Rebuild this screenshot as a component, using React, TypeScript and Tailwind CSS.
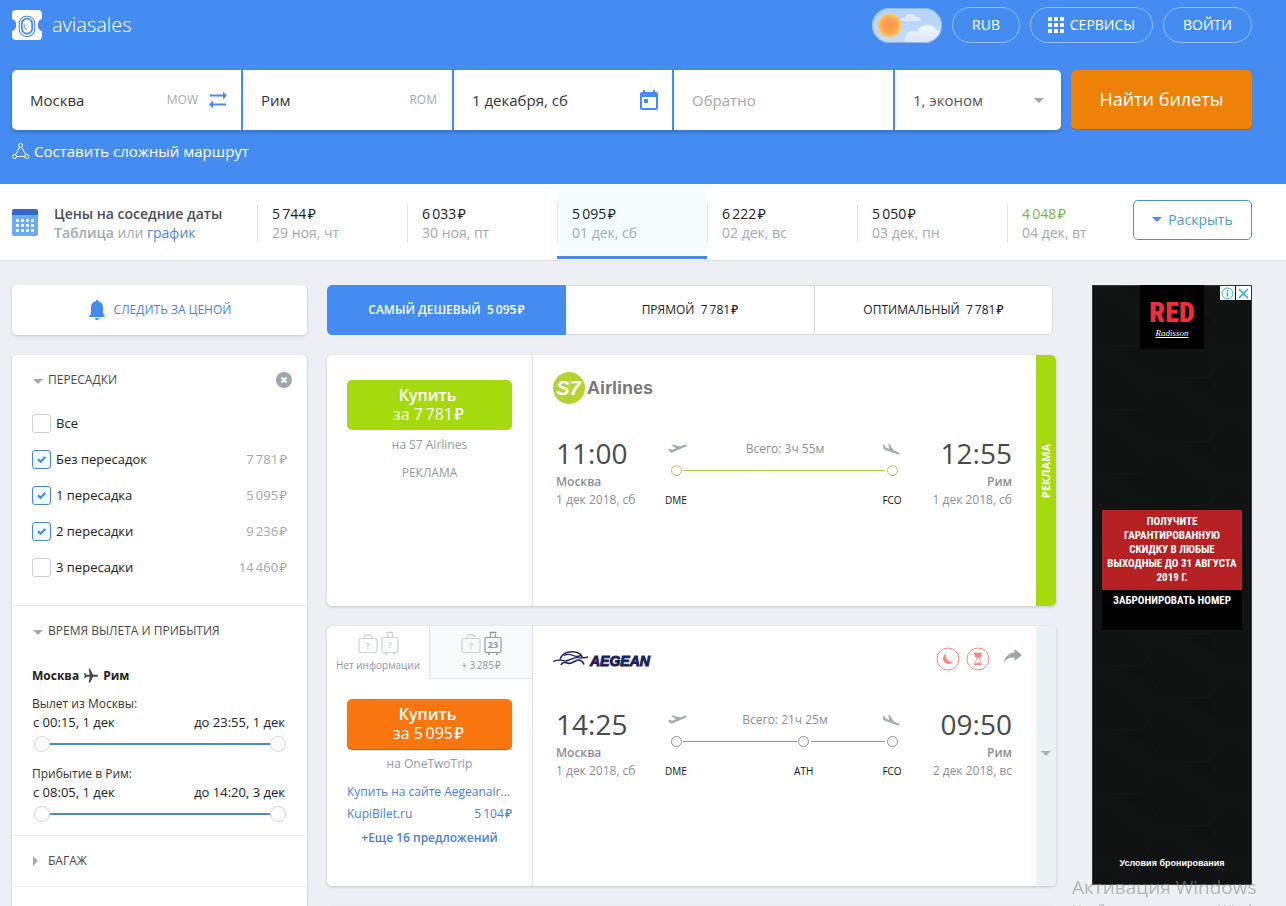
import React, { useState } from 'react';

const T = '\u2009';
const R = '\u200a₽';

function Caret({ className = '' }: { className?: string }) {
  return (
    <svg viewBox="0 0 10 5" className={`h-[5px] w-[10px] shrink-0 ${className}`} aria-hidden="true">
      <path d="M0 0h10L5 5z" fill="currentColor" />
    </svg>
  );
}

function BrandMark() {
  return (
    <svg viewBox="0 0 30 30" className="h-[30px] w-[30px]" aria-hidden="true">
      <path
        d="M4 0h22a4 4 0 0 1 4 4v5a5.500 5.500 0 0 0-4 6 5.500 5.500 0 0 0 4 6v5a4 4 0 0 1-4 4H4a4 4 0 0 1-4-4v-5a5.500 5.500 0 0 0 4-6 5.500 5.500 0 0 0-4-6V4a4 4 0 0 1 4-4z"
        fill="#fff"
      />
      <rect x="7.200" y="6.200" width="15.600" height="20.300" rx="7.500" fill="none" stroke="#458cf2" strokeWidth="1.100" />
      <rect x="9.800" y="8.600" width="10.400" height="15" rx="5.200" fill="none" stroke="#458cf2" strokeWidth="1.800" />
      <path d="M12.200 14.500c0 3 .8 4.500 2.800 5.200" fill="none" stroke="#458cf2" strokeWidth="1" />
    </svg>
  );
}

function WeatherToggle() {
  return (
    <button type="button" aria-label="Погода" className="h-[35px] w-[70px] cursor-pointer">
      <svg viewBox="0 0 70 35" className="h-full w-full" aria-hidden="true">
        <defs>
          <radialGradient id="sun">
            <stop offset="0" stopColor="#ff9548" />
            <stop offset=".55" stopColor="#fda152" />
            <stop offset="1" stopColor="#fdc766" />
          </radialGradient>
          <linearGradient id="sky" x1="0" x2="0" y1="0" y2="1">
            <stop offset="0" stopColor="#b4d3fa" />
            <stop offset="1" stopColor="#c2dcfb" />
          </linearGradient>
          <linearGradient id="cloud" x1="0" x2="0" y1="0" y2="1">
            <stop offset="0" stopColor="#f3f8ff" />
            <stop offset="1" stopColor="#d6e6fc" />
          </linearGradient>
          <clipPath id="capsule">
            <rect width="70" height="35" rx="17.500" />
          </clipPath>
        </defs>
        <g clipPath="url(#capsule)">
          <rect width="70" height="35" fill="url(#sky)" />
          <path d="M28 13c1-3 3-3.500 5-3 1-5.500 9-5.500 11-1 3-.5 4 1 5 4z" fill="#dfebfd" />
          <path d="M33 35c-1-8 3-12.500 8-12 2 0 3 .5 4 1 3-9 17-9 20-1 4-1 7 2 7 5v7z" fill="url(#cloud)" />
        </g>
        <rect x=".5" y=".5" width="69" height="34" rx="17" fill="none" stroke="#8fb6e8" />
        <circle cx="17.500" cy="17.500" r="11.700" fill="url(#sun)" stroke="#f3cf86" strokeWidth=".8" />
      </svg>
    </button>
  );
}

function Header() {
  const [from, setFrom] = useState('Москва');
  const [to, setTo] = useState('Рим');
  const pill =
    'flex h-9 cursor-pointer items-center justify-center gap-[6px] rounded-full border border-[#94befa] pb-px text-[14px] text-white';
  return (
    <header className="bg-[#458cf2] pr-[34px] pl-3 pt-[7px] pb-[22px]">
      <div className="flex items-center justify-between">
        <a href="#home" className="flex items-center gap-[10px] text-white">
          <BrandMark />
          <span className="text-[20px] leading-[30px] font-light">aviasales</span>
        </a>
        <nav className="flex items-center gap-[10px]">
          <WeatherToggle />
          <button type="button" className={`${pill} w-[68px]`}>RUB</button>
          <button type="button" className={`${pill} w-[123px]`}>
            <svg viewBox="0 0 16 16" className="h-4 w-4" fill="#fff" aria-hidden="true">
              {[0, 6, 12].map((y) => [0, 6, 12].map((x) => <rect key={`${x}-${y}`} x={x} y={y} width="4" height="4" rx=".6" />))}
            </svg>
            СЕРВИСЫ
          </button>
          <button type="button" className={`${pill} w-[89px]`}>ВОЙТИ</button>
        </nav>
      </div>

      <form className="mt-[27px] flex gap-[10px]" onSubmit={(e) => e.preventDefault()}>
        <div className="grid h-[60px] flex-1 grid-cols-[229fr_209fr_218fr_219fr_166fr] gap-[2px] overflow-hidden rounded-[5px] text-[15px] text-[#333] shadow-[0_2px_4px_rgba(0,0,0,0.2)]">
          <div className="flex min-w-0 items-center bg-white pr-[14px] pl-[18px]">
            <input aria-label="Откуда" value={from} onChange={(e) => setFrom(e.target.value)} className="w-0 flex-1 outline-none" />
            <span className="mr-[11px] text-[12px] text-[#a0abb4]">MOW</span>
            <button type="button" aria-label="Поменять местами" onClick={() => { setFrom(to); setTo(from); }} className="cursor-pointer">
              <svg viewBox="0 0 18 18" className="h-[18px] w-[18px]" fill="#458cf2" aria-hidden="true">
                <path d="M1 4h13V1l4 4-4 4V6H1zM17 13H4v-3l-4 4 4 4v-3h13z" transform="translate(0 -.5)" />
              </svg>
            </button>
          </div>
          <div className="flex min-w-0 items-center bg-white pr-[15px] pl-[18px]">
            <input aria-label="Куда" value={to} onChange={(e) => setTo(e.target.value)} className="w-0 flex-1 outline-none" />
            <span className="text-[12px] text-[#a0abb4]">ROM</span>
          </div>
          <div className="flex min-w-0 items-center bg-white pr-[14px] pl-[18px]">
            <input aria-label="Туда" defaultValue="1 декабря, сб" className="w-0 flex-1 outline-none" />
            <svg viewBox="0 0 18 20" className="h-5 w-[18px]" aria-hidden="true">
              <path d="M3 0h2v2h8V0h2v2h1a2 2 0 0 1 2 2v14a2 2 0 0 1-2 2H2a2 2 0 0 1-2-2V4a2 2 0 0 1 2-2h1zM2 7v11h14V7z" fill="#458cf2" fillRule="evenodd" />
              <rect x="4" y="9" width="4" height="4" fill="#458cf2" />
            </svg>
          </div>
          <div className="flex min-w-0 items-center bg-white px-[18px]">
            <input aria-label="Обратно" placeholder="Обратно" className="w-0 flex-1 outline-none placeholder:text-[#a3a7ab]" />
          </div>
          <div className="flex min-w-0 items-center bg-white pr-[17px] pl-[18px]">
            <select aria-label="Пассажиры и класс" className="w-0 flex-1 appearance-none text-[#555] outline-none">
              <option>1, эконом</option>
              <option>1, бизнес</option>
            </select>
            <Caret className="text-[#98a5ae]" />
          </div>
        </div>
        <button type="submit" className="h-[59px] w-[181px] cursor-pointer rounded-[5px] bg-[#ee8208] text-[18px] text-white shadow-[0_1px_1px_#b0621d]">
          Найти билеты
        </button>
      </form>
      <a href="#multi" className="mt-[11px] flex w-fit items-center gap-1 text-[15px] leading-[21px] text-white">
        <svg viewBox="0 0 18 18" className="h-[18px] w-[18px]" fill="none" stroke="#fff" aria-hidden="true">
          <circle cx="8.500" cy="2.500" r="2" />
          <circle cx="2.500" cy="13.500" r="2" />
          <circle cx="14.800" cy="13.500" r="2" />
          <path d="M7.600 4.300l-4.200 7.500M9.500 4.300l4.400 7.400M4.500 13.500h8.300" />
        </svg>
        Составить сложный маршрут
      </a>
    </header>
  );
}

const days = [
  [`5${T}744${R}`, '29 ноя, чт'],
  [`6${T}033${R}`, '30 ноя, пт'],
  [`5${T}095${R}`, '01 дек, сб'],
  [`6${T}222${R}`, '02 дек, вс'],
  [`5${T}050${R}`, '03 дек, пн'],
  [`4${T}048${R}`, '04 дек, вт'],
];

function PriceStrip() {
  return (
    <section className="flex border-b border-[#dee0e3] bg-white pr-[34px] pl-3">
      <svg viewBox="0 0 26 27" className="mt-[25px] h-[27px] w-[26px] shrink-0" aria-hidden="true">
        <rect width="26" height="27" rx="2.500" fill="#6caaf3" />
        <path d="M2.500 0h21A2.500 2.500 0 0 1 26 2.500V6H0V2.500A2.500 2.500 0 0 1 2.500 0z" fill="#3069c9" />
        {[10, 15, 20].map((y) => [4, 9, 14, 19].map((x) => <rect key={`${x}-${y}`} x={x} y={y} width="3" height="3" fill="#eaf3fd" />))}
      </svg>
      <div className="ml-4 w-[203px] shrink-0 pt-5 text-[14px] leading-[19px]">
        <h2 className="font-semibold text-[#4a4f55]">Цены на соседние даты</h2>
        <p className="text-[#a0abb4]">
          <span className="font-semibold">Таблица</span> или <a href="#chart" className="text-[#4f86dc]">график</a>
        </p>
      </div>
      <div className="grid flex-1 grid-cols-6">
        {days.map(([price, day], i) => {
          const active = i === 2;
          return (
            <button
              key={day}
              type="button"
              className={`h-[76px] cursor-pointer pb-px text-left text-[14px] leading-[19px] ${active ? 'bg-[#f4fdff]' : ''}`}
            >
              <span className={`block h-full border-b-[3px] pt-5 ${active ? 'border-[#4a87de]' : 'border-transparent'}`}>
                <span className="block w-full border-l border-[#e2e5e8] pl-[14px]">
                  <span className={`block ${i === 5 ? 'text-[#79b549]' : 'text-[#222]'}`}>{price}</span>
                  <span className="block text-[#a0abb4]">{day}</span>
                </span>
              </span>
            </button>
          );
        })}
      </div>
      <button type="button" className="mt-4 -ml-6 flex h-10 w-[119px] shrink-0 cursor-pointer items-center justify-center gap-[6px] rounded-[5px] border border-[#409dc2] bg-white pb-px text-[14px] text-[#4c9dcb]">
        <Caret className="text-[#458cf2]" />
        Раскрыть
      </button>
    </section>
  );
}

function SectionTitle({ title, closed, clear }: { title: string; closed?: boolean; clear?: boolean }) {
  return (
    <div className="flex h-[50px] items-center justify-between">
      <button type="button" aria-expanded={!closed} className="flex cursor-pointer items-center gap-1 text-[12px] font-medium text-[#4a4a4a]">
        <svg viewBox="0 0 12 10" className="h-[10px] w-3" fill="#a0abb0" aria-hidden="true">
          {closed ? <path d="M1 0l5 5-5 5z" /> : <path d="M1 4h10L6 9z" />}
        </svg>
        {title}
      </button>
      {clear && (
        <button type="button" aria-label="Сбросить" className="-mr-[5px] cursor-pointer">
          <svg viewBox="0 0 16 16" className="h-4 w-4" aria-hidden="true">
            <circle cx="8" cy="8" r="8" fill="#9aa8b1" />
            <path d="M5.500 5.500l5 5M10.500 5.500l-5 5" stroke="#fff" strokeWidth="1.800" />
          </svg>
        </button>
      )}
    </div>
  );
}

const stops = [
  { label: 'Все', price: '', on: false },
  { label: 'Без пересадок', price: `7${T}781${R}`, on: true },
  { label: '1 пересадка', price: `5${T}095${R}`, on: true },
  { label: '2 пересадки', price: `9${T}236${R}`, on: true },
  { label: '3 пересадки', price: `14${T}460${R}`, on: false },
];

const thumb =
  'pointer-events-none absolute inset-0 m-0 h-[22px] w-full appearance-none bg-transparent [&::-webkit-slider-thumb]:pointer-events-auto [&::-webkit-slider-thumb]:h-4 [&::-webkit-slider-thumb]:w-4 [&::-webkit-slider-thumb]:appearance-none [&::-webkit-slider-thumb]:rounded-full [&::-webkit-slider-thumb]:border [&::-webkit-slider-thumb]:border-[#d3d6d9] [&::-webkit-slider-thumb]:bg-white';

function TimeRange({ title, from, to }: { title: string; from: string; to: string }) {
  return (
    <div>
      <div className="text-[12px] leading-[18px] text-[#333]">{title}</div>
      <div className="flex justify-between pr-[2px] pl-px text-[13px] leading-[18px] text-[#222]">
        <span>{from}</span>
        <span>{to}</span>
      </div>
      <div className="relative mt-[2px] mr-px ml-[2px] flex h-[22px] items-center px-4">
        <div className="h-[2px] w-full bg-[#4f86d0]" />
        <input type="range" aria-label={`${title} с`} defaultValue={0} className={thumb} />
        <input type="range" aria-label={`${title} до`} defaultValue={100} className={thumb} />
      </div>
    </div>
  );
}

const card = 'rounded-[5px] bg-white shadow-[0_1px_3px_rgba(0,0,0,0.18)]';

function Sidebar() {
  return (
    <aside className="flex w-[295px] shrink-0 flex-col gap-5">
      <button type="button" className={`${card} flex h-[50px] cursor-pointer items-center justify-center gap-2 text-[12px] font-medium text-[#4a80dc]`}>
        <svg viewBox="0 0 16 20" className="h-5 w-[18px]" fill="#458cf2" aria-hidden="true">
          <path d="M8 0c.8 0 1.300.5 1.300 1.300C12.500 2 14 4.300 14 7.500v6L16 16.500v.5H0v-.5l2-3v-6C2 4.300 3.500 2 6.700 1.300 6.700.5 7.200 0 8 0zM6 18h4c0 1.200-.8 2-2 2s-2-.8-2-2z" />
        </svg>
        СЛЕДИТЬ ЗА ЦЕНОЙ
      </button>
      <div className={`${card} flex-1`}>
        <section className="border-b border-[#edeff1] px-5 pb-5">
          <SectionTitle title="ПЕРЕСАДКИ" clear />
          {stops.map((s) => (
            <label key={s.label} className="flex h-9 cursor-pointer items-center pt-px text-[13px] text-[#222]">
              <span className="relative mr-[5px] h-[19px] w-[19px]">
                <input
                  type="checkbox"
                  defaultChecked={s.on}
                  className="peer block h-[19px] w-[19px] appearance-none rounded-[3px] border border-[#cdd0d2] bg-white checked:border-[#4f86dc] checked:bg-[#f0fbff]"
                />
                <svg viewBox="0 0 19 19" className="pointer-events-none absolute inset-0 hidden peer-checked:block" aria-hidden="true">
                  <path d="M6 9.300l2.500 2.400 4.700-4.700" fill="none" stroke="#4a87de" strokeWidth="2.200" />
                </svg>
              </span>
              {s.label}
              <span className="ml-auto text-[#a3a9ad]">{s.price}</span>
            </label>
          ))}
        </section>
        <section className="border-b border-[#edeff1] px-5 pb-[10px]">
          <SectionTitle title="ВРЕМЯ ВЫЛЕТА И ПРИБЫТИЯ" />
          <div className="mt-[10px] mb-[9px] flex items-center gap-1 text-[12px] leading-5 font-bold text-[#222]">
            Москва
            <svg viewBox="0 0 24 24" className="h-4 w-4 rotate-90" fill="#444" aria-hidden="true">
              <path d="M22 15.500v-2l-9-4.500V3.500c0-.83-.67-2-1.500-2S10 2.670 10 3.500V9l-9 4.500v2l9-1.500V19l-2.500 2v1.500l4-1 4 1V21L13 19v-5z" />
            </svg>
            Рим
          </div>
          <div className="flex flex-col gap-[10px]">
            <TimeRange title="Вылет из Москвы:" from="с 00:15, 1 дек" to="до 23:55, 1 дек" />
            <TimeRange title="Прибытие в Рим:" from="с 08:05, 1 дек" to="до 14:20, 3 дек" />
          </div>
        </section>
        <section className="border-b border-[#edeff1] px-5">
          <SectionTitle title="БАГАЖ" closed />
        </section>
      </div>
    </aside>
  );
}

function PlaneUp() {
  return (
    <svg viewBox="0 0 19 10" className="h-[10px] w-[19px]" fill="#a3adb3" aria-hidden="true">
      <path d="M0 5.200l1.600-.5 2.600 1.100 3.800-1.500L3.200.9 5.200.4l7 2.200 3.500-1.500c1.300-.5 2.600-.6 3.100-.2.300.6-.7 1.500-2 2L4.500 8.600c-.9.300-1.600.2-2.200-.4z" />
    </svg>
  );
}

function PlaneDown() {
  return (
    <svg viewBox="0 0 17 12" className="h-3 w-[17px]" fill="#a3adb3" aria-hidden="true">
      <path d="M0 1.500l1.400.5 1.300 2.600 3.700 1.300L5.200.8l1.700.6 4 6.100 3.700 1.500c1.300.5 2.300 1.300 2.100 2-.3.600-1.500.6-2.800.1L2.200 7C.9 6.500.3 5.900.2 4.800z" />
    </svg>
  );
}

function Route({ total, codes, green }: { total: string; codes: string[]; green?: boolean }) {
  const line = green ? 'bg-[#abcb3c]' : 'bg-[#8f9396]';
  const ring = green ? 'border-[#abcb3c]' : 'border-[#8f9396]';
  const spans = codes.length === 3 ? ['grow-[104]', 'grow-[68]'] : ['grow'];
  return (
    <div className="flex-1 pt-[5px]">
      <div className="flex h-[18px] items-center justify-between px-[3px] text-[12px] text-[#8b8f94]">
        <PlaneUp />
        <span>Всего: {total}</span>
        <PlaneDown />
      </div>
      <div className="mt-[7px] flex">
        {codes.map((code, i) => (
          <React.Fragment key={code}>
            {i > 0 && <div className={`-mx-1 mt-[5px] h-px ${line} ${spans[i - 1]}`} />}
            <div className="flex w-[22px] flex-col items-center gap-[17px]">
              <span className={`h-[11px] w-[11px] rounded-full border ${ring}`} />
              <span className="text-[10px] leading-[14px] font-medium text-[#111]">{code}</span>
            </div>
          </React.Fragment>
        ))}
      </div>
    </div>
  );
}

function Endpoint({ time, city, date, right }: { time: string; city: string; date: string; right?: boolean }) {
  return (
    <div className={`w-[109px] whitespace-nowrap text-[12px] leading-[18px] text-[#8b8f94] ${right ? 'text-right' : ''}`}>
      <div className="mb-[2px] text-[28px] leading-9 text-[#4a4a4a]">{time}</div>
      <div className="font-semibold">{city}</div>
      <div>{date}</div>
    </div>
  );
}

function Flight(props: {
  logo: React.ReactNode;
  actions?: React.ReactNode;
  dep: [string, string, string];
  arr: [string, string, string];
  total: string;
  codes: string[];
  green?: boolean;
}) {
  const { logo, actions, dep, arr, total, codes, green } = props;
  return (
    <div className="w-[503px] grow pt-[17px]">
      <div className="flex h-8 items-center justify-between pr-[14px] pl-5">
        {logo}
        {actions}
      </div>
      <div className="mt-[31px] flex pr-6 pl-[23px]">
        <Endpoint time={dep[0]} city={dep[1]} date={dep[2]} />
        <Route total={total} codes={codes} green={green} />
        <Endpoint time={arr[0]} city={arr[1]} date={arr[2]} right />
      </div>
    </div>
  );
}

function S7Logo() {
  return (
    <div className="flex items-center gap-[2px] font-['Liberation_Sans',sans-serif] font-bold">
      <span className="flex h-8 w-8 items-center justify-center rounded-full bg-[#b3d335] pr-px text-[20px] leading-none text-white italic">S7</span>
      <span className="text-[18px] leading-none text-[#77787b]">Airlines</span>
    </div>
  );
}

function AegeanLogo() {
  return (
    <div className="flex items-center gap-px">
      <svg viewBox="0 0 36 18" className="h-[18px] w-9" fill="none" stroke="#1a2356" aria-hidden="true">
        <path d="M0 11.500c4-1.500 8-1.800 11-.8 5 1.500 8-4 14-3 3 .4 6 .3 10-.7" strokeWidth="1.300" />
        <path d="M7 9.500C9 4 14 1.800 19 1.800S28 4 29.500 7.500" strokeWidth="1.500" />
        <path d="M11 5.500c3-1.500 6-1.500 9 0s6 .8 8-.2" strokeWidth="1.300" />
        <path d="M8 15c1-3 4-3.200 7-1.800 4 1.500 7-3.700 11-3.200 2.500.3 4 2 5 4.500" strokeWidth="1.600" />
      </svg>
      <span className="pt-[3px] font-['Liberation_Sans',sans-serif] text-[14px] leading-none font-bold text-[#1a2356] italic [-webkit-text-stroke:1px_#1a2356]">AEGEAN</span>
    </div>
  );
}

function Bag({ value, strong, wheels }: { value: string; strong?: boolean; wheels?: boolean }) {
  const c = strong ? '#8b9ba5' : '#ccd2d6';
  return wheels ? (
    <svg viewBox="0 0 18 24" className="h-6 w-[18px]" fill="none" stroke={c} aria-hidden="true">
      <rect x="1" y="6.500" width="16" height="15" rx="1.500" strokeWidth="1.200" />
      <path d="M6.500 6V2.500M11.500 6V2.500" strokeWidth="1.200" />
      <path d="M5.500 1.500h7M5 22v2M13 22v2" strokeWidth="1.600" />
      <text x="9" y="17" textAnchor="middle" fontSize="9" fontWeight="700" fill={c} stroke="none">{value}</text>
    </svg>
  ) : (
    <svg viewBox="0 0 20 24" className="h-6 w-5" fill="none" stroke={c} aria-hidden="true">
      <rect x="1" y="7.500" width="18" height="14" rx="1.500" strokeWidth="1.200" />
      <path d="M6 7c0-4.500 8-4.500 8 0" strokeWidth="1.200" />
      <text x="10" y="17.500" textAnchor="middle" fontSize="9" fontWeight="700" fill={c} stroke="none">{value}</text>
    </svg>
  );
}

function BuyButton({ price, green }: { price: string; green?: boolean }) {
  return (
    <button
      type="button"
      className={`h-[50px] w-full cursor-pointer rounded-[5px] text-[16px] leading-[19px] text-white ${green ? 'bg-[#a5db0e]' : 'bg-[#f9750d] shadow-[0_1px_1px_#b8540c]'}`}
    >
      <span className="block pr-1 font-semibold">Купить</span>
      <span className="block pr-[2px] font-medium">за {price}</span>
    </button>
  );
}

function ShareIcon() {
  return (
    <svg viewBox="0 0 18 14" className="h-[14px] w-[18px]" fill="#9aa8b1" aria-hidden="true">
      <path d="M10.500 0L18 6l-7.500 6V8.500C6 8.300 2.500 9.500 0 13.500 1 8 4.500 4 10.500 3.500z" />
    </svg>
  );
}

function Results() {
  const tab = 'h-[50px] cursor-pointer border border-[#d9dcdf] text-[12px] font-medium';
  return (
    <main className="flex min-w-0 flex-1 flex-col gap-5">
      <div className="mr-[3px] grid grid-cols-[239fr_248fr_239fr]" role="tablist">
        <button type="button" role="tab" aria-selected="true" className={`${tab} rounded-l-[5px] !border-[#458cf2] bg-[#458cf2] !font-semibold text-white`}>
          САМЫЙ ДЕШЕВЫЙ&nbsp; 5{T}095{R}
        </button>
        <button type="button" role="tab" aria-selected="false" className={`${tab} border-x-0 bg-white text-[#222]`}>
          ПРЯМОЙ&nbsp; 7{T}781{R}
        </button>
        <button type="button" role="tab" aria-selected="false" className={`${tab} rounded-r-[5px] bg-white text-[#222]`}>
          ОПТИМАЛЬНЫЙ&nbsp; 7{T}781{R}
        </button>
      </div>

      <article className={`${card} flex min-h-[251px] overflow-hidden`}>
        <div className="w-[206px] shrink-0 border-r border-[#e0e3e6] px-5 pt-[25px] text-center text-[#8f9aa3]">
          <BuyButton price={`7${T}781${R}`} green />
          <p className="mt-[6px] text-[12px] leading-[18px]">на S7 Airlines</p>
          <p className="mt-[10px] text-[12px] leading-[18px]">РЕКЛАМА</p>
        </div>
        <Flight
          logo={<S7Logo />}
          dep={['11:00', 'Москва', '1 дек 2018, сб']}
          arr={['12:55', 'Рим', '1 дек 2018, сб']}
          total="3ч 55м"
          codes={['DME', 'FCO']}
          green
        />
        <div className="flex w-5 shrink-0 items-center justify-center bg-[#a5db0e] pb-[18px]">
          <span className="rotate-180 text-[11px] font-bold text-white [writing-mode:vertical-rl]">РЕКЛАМА</span>
        </div>
      </article>

      <article className={`${card} flex min-h-[260px] overflow-hidden`}>
        <div className="w-[206px] shrink-0 border-r border-[#e0e3e6]">
          <div className="grid h-[53px] grid-cols-[102px_1fr] text-[10px] leading-[14px] whitespace-nowrap text-[#8f9aa3]">
            <button type="button" className="flex cursor-pointer flex-col items-center gap-[3px] pt-[5px]">
              <span className="flex gap-[3px]"><Bag value="?" /><Bag value="?" wheels /></span>
              Нет информации
            </button>
            <button type="button" className="flex cursor-pointer flex-col items-center gap-[3px] border-b border-l border-[#e0e3e6] bg-[#f7f9fb] pt-[5px]">
              <span className="flex gap-[3px]"><Bag value="?" /><Bag value="23" wheels strong /></span>
              + 3{T}285{R}
            </button>
          </div>
          <div className="px-5 pt-5 text-[12px] leading-[18px] text-[#4a80dc]">
            <BuyButton price={`5${T}095${R}`} />
            <p className="mt-[6px] text-center text-[#8f9aa3]">на OneTwoTrip</p>
            <a href="#aegean" className="mt-[10px] block truncate">Купить на сайте Aegeanair.com</a>
            <a href="#kupibilet" className="mt-1 flex justify-between">
              <span>KupiBilet.ru</span>
              <span className="font-medium">5{T}104{R}</span>
            </a>
            <a href="#more" className="mt-[6px] block text-center font-semibold">+Еще 16 предложений</a>
          </div>
        </div>
        <Flight
          logo={<AegeanLogo />}
          actions={
            <div className="flex items-center gap-[6px]">
              <svg viewBox="0 0 24 24" className="h-6 w-6" role="img" aria-label="Ночная пересадка">
                <circle cx="12" cy="12" r="11" fill="none" stroke="#f18a80" />
                <path d="M10 6.500a5.600 5.600 0 1 0 7.300 8c-4.800 1.300-8.300-3-7.300-8z" fill="#f18a80" />
              </svg>
              <svg viewBox="0 0 24 24" className="h-6 w-6" role="img" aria-label="Длинная пересадка">
                <circle cx="12" cy="12" r="11" fill="none" stroke="#f18a80" />
                <path d="M8 6.500h8M8 17.500h8" stroke="#f18a80" strokeWidth="1.400" />
                <path d="M9 7v1.500c0 2 2 2.500 2 3.500s-2 1.500-2 3.500V17h6v-1.500c0-2-2-2.500-2-3.500s2-1.500 2-3.500V7z" fill="none" stroke="#f18a80" />
                <path d="M9 7h6v2l-3 2.500L9 9zM10 17l2-2 2 2z" fill="#f18a80" />
              </svg>
              <button type="button" aria-label="Поделиться" className="ml-2 cursor-pointer pb-[6px]"><ShareIcon /></button>
            </div>
          }
          dep={['14:25', 'Москва', '1 дек 2018, сб']}
          arr={['09:50', 'Рим', '2 дек 2018, вс']}
          total="21ч 25м"
          codes={['DME', 'ATH', 'FCO']}
        />
        <button type="button" aria-label="Подробнее" className="flex w-5 shrink-0 cursor-pointer items-center justify-center bg-[#eaf2f6] pb-[6px] text-[#a6b0b7]">
          <Caret />
        </button>
      </article>

      <article className={`${card} h-10`} />
    </main>
  );
}

function HexCells() {
  const cells: [number, number][] = [];
  for (let col = -1; col < 3; col++) for (let row = -1; row < 11; row++) cells.push([col, row]);
  return (
    <svg viewBox="0 0 160 600" preserveAspectRatio="xMidYMid slice" className="absolute inset-0 h-full w-full" aria-hidden="true">
      <defs>
        <linearGradient id="cell" x1="0" y1="1" x2="1" y2="0">
          <stop offset="0" stopColor="#101212" />
          <stop offset=".7" stopColor="#121414" />
          <stop offset="1" stopColor="#0c0d0d" />
        </linearGradient>
      </defs>
      <rect width="160" height="600" fill="#111212" />
      {cells.map(([c, r]) => {
        const x = 28 + c * 66;
        const y = 29 + r * 64 + (c % 2 !== 0 ? 0 : -32);
        return <path key={`${c}-${r}`} d={`M${x - 22} ${y}h44l22 32-22 32h-44l-22-32z`} fill="url(#cell)" stroke="#171919" strokeWidth=".7" />;
      })}
      <rect x=".5" y=".5" width="159" height="599" fill="none" stroke="#333638" />
    </svg>
  );
}

function Banner() {
  const narrow = "font-['Roboto_Condensed','Liberation_Sans_Narrow','Open_Sans_Condensed','Roboto',sans-serif]";
  return (
    <aside className="relative flex h-[600px] w-40 shrink-0 flex-col items-center text-white">
      <HexCells />
      <div className={`relative flex h-16 w-16 flex-col items-center bg-black pt-[13px] ${narrow}`}>
        <span className="text-[28px] leading-[30px] font-black text-[#ee2e3a]">RED</span>
        <span className="font-['Liberation_Serif',serif] text-[9px] leading-[10px] italic underline">Radisson</span>
      </div>
      <div className="absolute top-px right-px flex gap-px">
        <button type="button" aria-label="О рекламе" className="flex h-[14px] w-[15px] cursor-pointer items-center justify-center bg-white">
          <svg viewBox="0 0 13 13" className="h-[13px] w-[13px]" fill="none" stroke="#32a5c8" aria-hidden="true">
            <circle cx="6.500" cy="6.500" r="5.500" />
            <path d="M6.500 5.500v4M6.500 3v1.500" strokeWidth="1.500" />
          </svg>
        </button>
        <button type="button" aria-label="Закрыть" className="flex h-[14px] w-[15px] cursor-pointer items-center justify-center bg-white">
          <svg viewBox="0 0 13 13" className="h-[13px] w-[13px]" stroke="#32a5c8" strokeWidth="1.500" aria-hidden="true">
            <path d="M2 2l9 9M11 2l-9 9" />
          </svg>
        </button>
      </div>
      <div className={`relative mt-[161px] w-[140px] text-center text-[11px] leading-[14px] font-bold ${narrow}`}>
        <p className="bg-[#b52022] py-[5px] whitespace-nowrap">
          ПОЛУЧИТЕ<br />ГАРАНТИРОВАННУЮ<br />СКИДКУ В ЛЮБЫЕ<br />ВЫХОДНЫЕ ДО 31 АВГУСТА<br />2019 Г.
        </p>
        <a href="#book" className="block h-10 bg-black pt-1 whitespace-nowrap">ЗАБРОНИРОВАТЬ НОМЕР</a>
      </div>
      <a href="#terms" className="relative mt-auto mb-4 font-['Liberation_Sans',sans-serif] text-[9px] leading-3 font-bold">Условия бронирования</a>
    </aside>
  );
}

export default function App() {
  return (
    <div className="h-screen overflow-x-hidden overflow-y-auto bg-[#edeff4] font-['Open_Sans','Noto_Sans',sans-serif] [scrollbar-width:none]">
      <Header />
      <PriceStrip />
      <div className="flex pt-6 pr-[34px] pb-6 pl-3">
        <Sidebar />
        <div className="ml-5 flex min-w-0 flex-1">
          <Results />
        </div>
        <div className="ml-9">
          <Banner />
        </div>
      </div>
      <div className="pointer-events-none fixed right-0 bottom-0 h-[31px] w-[214px] overflow-hidden whitespace-nowrap text-[#8c8c8c]/60">
        <div className="text-[19px] leading-[25px]">Активация Windows</div>
        <div className="text-[14px] leading-5">Чтобы активировать Windows</div>
      </div>
    </div>
  );
}
